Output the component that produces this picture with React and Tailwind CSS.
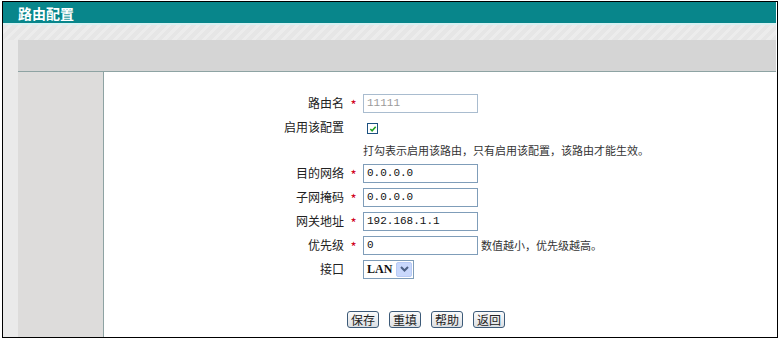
import React from "react";

const cjk = "font-['Noto_Sans_CJK_SC','Noto_Sans',sans-serif]";
const mono = "font-['Liberation_Mono','Noto_Sans_CJK_SC',monospace]";

function Star() {
  return <span className="text-[#d0021b] text-[13px] leading-none">*</span>;
}

function Row({ label, required, children, h = "h-[24px]" }) {
  return (
    <div className={`flex items-center ${h}`}>
      <div className="w-[240px] text-right text-[12px] text-[#222]">{label}</div>
      <div className="w-[19px] flex justify-center pt-[3px]">{required ? <Star /> : null}</div>
      <div className="flex items-center">{children}</div>
    </div>
  );
}

function TextBox({ value, disabled }) {
  return (
    <div
      className={`w-[115px] h-[19px] border bg-white flex items-center px-[3px] text-[11px] ${mono} ${
        disabled ? "border-[#a9bccf] text-[#9a9a9a]" : "border-[#7f9db9] text-[#111]"
      }`}
    >
      {value}
    </div>
  );
}

function Btn({ children }) {
  return (
    <button className="h-[17px] px-[3px] rounded-[3px] border border-[#3c5a78] bg-gradient-to-b from-[#fbfbfb] to-[#dcdfe3] text-[12px] leading-none text-[#222]">
      {children}
    </button>
  );
}

export default function App() {
  return (
    <div className={`w-[781px] h-[341px] bg-white ${cjk}`}>
      <div className="ml-[2px] mt-[1px] w-[776px] h-[337px] border border-black flex flex-col pr-[1px]">
        {/* title bar */}
        <div className="h-[21px] bg-[#08868b] flex items-center pl-[15px]">
          <span className="text-white font-bold text-[14px] leading-none">路由配置</span>
        </div>
        <div className="h-[2px] bg-[#d7f1f2]" />
        <div className="h-[15px] bg-[repeating-linear-gradient(135deg,#e6e6e6_0px,#e6e6e6_4px,#ececec_4px,#ececec_7px)]" />

        <div className="flex flex-1">
          <div className="w-[15px] bg-[#eaeaea]" />
          <div className="flex-1 flex flex-col">
            <div className="h-[32px] bg-[#d5d5d5] border-b border-[#8ea3a3]" />
            <div className="flex flex-1">
              <div className="w-[85px] bg-[#dddcdb]" />
              <div className="flex-1 bg-white border-l border-[#8ea3a3] pt-[19px]">
                <Row label="路由名" required>
                  <TextBox value="11111" disabled />
                </Row>
                <Row label="启用该配置">
                  <div className="ml-[4px] mt-[3px] w-[11px] h-[11px] border border-[#1c5180] bg-white flex items-center justify-center">
                    <svg width="8" height="8" viewBox="0 0 9 9">
                      <path d="M1.5 4.5 L3.5 6.5 L7.5 2" fill="none" stroke="#21a121" strokeWidth="1.8" />
                    </svg>
                  </div>
                </Row>
                <Row label="" h="h-[22px]">
                  <span className="text-[11px] text-[#333]">打勾表示启用该路由，只有启用该配置，该路由才能生效。</span>
                </Row>
                <Row label="目的网络" required>
                  <TextBox value="0.0.0.0" />
                </Row>
                <Row label="子网掩码" required>
                  <TextBox value="0.0.0.0" />
                </Row>
                <Row label="网关地址" required>
                  <TextBox value="192.168.1.1" />
                </Row>
                <Row label="优先级" required>
                  <TextBox value="0" />
                  <span className="ml-[3px] text-[11px] text-[#333]">数值越小，优先级越高。</span>
                </Row>
                <Row label="接口">
                  <div className="w-[51px] h-[19px] border border-[#7f9db9] bg-white flex items-center">
                    <span className="flex-1 pl-[3px] text-[12px] font-semibold font-['Liberation_Serif',serif] text-[#111]">LAN</span>
                    <div className="w-[16px] h-[15px] mr-[1px] rounded-[2px] bg-[#c9d8fc] border border-[#b9cbf5] flex items-center justify-center">
                      <svg width="9" height="6" viewBox="0 0 9 6">
                        <path d="M1 1 L4.5 4.5 L8 1" fill="none" stroke="#4d6185" strokeWidth="2" />
                      </svg>
                    </div>
                  </div>
                </Row>
                <div className="flex gap-[10px] pl-[243px] mt-[30px]">
                  <Btn>保存</Btn>
                  <Btn>重填</Btn>
                  <Btn>帮助</Btn>
                  <Btn>返回</Btn>
                </div>
              </div>
            </div>
          </div>
        </div>
      </div>
    </div>
  );
}
